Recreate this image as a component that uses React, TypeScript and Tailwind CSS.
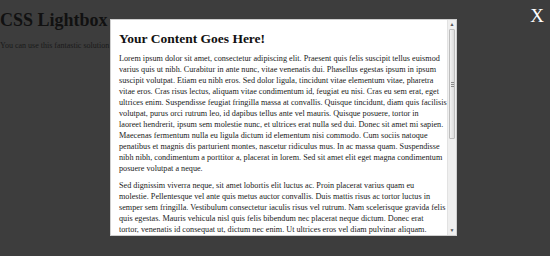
const paragraphs = [
  [
    'Lorem ipsum dolor sit amet, consectetur adipiscing elit. Praesent quis felis suscipit tellus euismod',
    'varius quis ut nibh. Curabitur in ante nunc, vitae venenatis dui. Phasellus egestas ipsum in ipsum',
    'suscipit volutpat. Etiam eu nibh eros. Sed dolor ligula, tincidunt vitae elementum vitae, pharetra',
    'vitae eros. Cras risus lectus, aliquam vitae condimentum id, feugiat eu nisi. Cras eu sem erat, eget',
    'ultrices enim. Suspendisse feugiat fringilla massa at convallis. Quisque tincidunt, diam quis facilisis',
    'volutpat, purus orci rutrum leo, id dapibus tellus ante vel mauris. Quisque posuere, tortor in',
    'laoreet hendrerit, ipsum sem molestie nunc, et ultrices erat nulla sed dui. Donec sit amet mi sapien.',
    'Maecenas fermentum nulla eu ligula dictum id elementum nisi commodo. Cum sociis natoque',
    'penatibus et magnis dis parturient montes, nascetur ridiculus mus. In ac massa quam. Suspendisse',
    'nibh nibh, condimentum a porttitor a, placerat in lorem. Sed sit amet elit eget magna condimentum',
    'posuere volutpat a neque.',
  ],
  [
    'Sed dignissim viverra neque, sit amet lobortis elit luctus ac. Proin placerat varius quam eu',
    'molestie. Pellentesque vel ante quis metus auctor convallis. Duis mattis risus ac tortor luctus in',
    'semper sem fringilla. Vestibulum consectetur iaculis risus vel rutrum. Nam scelerisque gravida felis',
    'quis egestas. Mauris vehicula nisl quis felis bibendum nec placerat neque dictum. Donec erat',
    'tortor, venenatis id consequat ut, dictum nec enim. Ut ultrices eros vel diam pulvinar aliquam.',
  ],
]

function Scrollbar() {
  return (
    <div className="flex w-[9px] shrink-0 flex-col border-l border-[#e2e2e2] bg-[#efefef]">
      <div className="flex h-[9px] items-center justify-center text-[5px] leading-none text-[#555]">▲</div>
      <div className="mx-[1px] flex h-[110px] items-center justify-center rounded-[1px] border border-[#bdbdbd] bg-gradient-to-r from-[#f4f4f4] to-[#dcdcdc]">
        <div className="flex flex-col gap-[1px]">
          <div className="h-px w-[3px] bg-[#8a8a8a]" />
          <div className="h-px w-[3px] bg-[#8a8a8a]" />
          <div className="h-px w-[3px] bg-[#8a8a8a]" />
        </div>
      </div>
      <div className="flex-1" />
      <div className="flex h-[9px] items-center justify-center text-[5px] leading-none text-[#555]">▼</div>
    </div>
  )
}

export default function App() {
  return (
    <div className="relative h-[256px] w-full overflow-hidden bg-[#3d3d3d] font-['Liberation_Serif',serif]">
      <h1 className="pt-[10px] text-[18px] font-bold leading-[21px] text-[#111]">CSS Lightbox</h1>
      <p className="mt-[10px] text-[8px] leading-[10px] text-[#1a1a1a]">You can use this fantastic solution</p>

      <div className="absolute right-[6px] top-[5px] text-[19px] leading-[22px] text-white">X</div>

      <div className="absolute left-[110px] top-[19px] flex h-[217px] w-[347px] border border-[#cfcfcf] bg-white">
        <div className="flex-1 overflow-hidden pl-[8px] pr-[2px] pt-[10px]">
          <h2 className="text-[13.5px] font-bold leading-[17px] text-[#111]">Your Content Goes Here!</h2>
          {paragraphs.map((lines, i) => (
            <p key={i} className="mt-[6px] text-[8.2px] leading-[11px] text-[#222]">
              {lines.map((line, j) => (
                <span key={j} className="block whitespace-nowrap">{line}</span>
              ))}
            </p>
          ))}
        </div>
        <Scrollbar />
      </div>
    </div>
  )
}
